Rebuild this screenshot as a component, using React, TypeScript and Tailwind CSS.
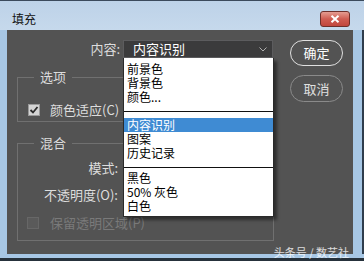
import React from "react";

const font = { fontFamily: '"Noto Sans CJK SC", "Noto Sans", sans-serif' };

function Check() {
  return (
    <div className="w-[12px] h-[12px] bg-[#d4d4d4] border border-[#9a9a9a] flex items-center justify-center">
      <svg width="10" height="10" viewBox="0 0 10 10">
        <polyline points="1.5,5 4,7.5 8.5,2" fill="none" stroke="#2a2a2a" strokeWidth="1.8" />
      </svg>
    </div>
  );
}

function Item({ children, active }: { children: React.ReactNode; active?: boolean }) {
  return (
    <div
      className={
        "h-[14px] leading-[14px] pl-[3px] text-[12px] " +
        (active ? "bg-[#3f8bd3] text-white" : "text-black")
      }
    >
      {children}
    </div>
  );
}

export default function App() {
  return (
    <div
      className="w-[364px] h-[261px] relative overflow-hidden bg-[#a9c8e4] flex flex-col"
      style={font}
    >
      {/* title bar */}
      <div className="h-[30px] flex items-start border-t border-[#3b4a5c] bg-gradient-to-b from-[#bdd2e8] to-[#c6d9ec]">
        <div className="mt-[11px] ml-[12px] text-[12px] leading-[14px] text-[#111]">填充</div>
        <div className="ml-auto mr-[14px] mt-[10px] w-[30px] h-[16px] rounded-[3px] border border-[#6e2f2b] bg-gradient-to-b from-[#e49c92] via-[#cf5c52] to-[#c1463d] flex items-center justify-center">
          <svg width="10" height="8" viewBox="0 0 10 8">
            <path d="M1.5 0.8 L8.5 7.2 M8.5 0.8 L1.5 7.2" stroke="#ffffff" strokeWidth="2" />
          </svg>
        </div>
      </div>

      {/* middle */}
      <div className="flex-1 flex">
        <div className="w-[7px] bg-[#a7c7e5]" />
        <div className="flex-1 bg-[#535353] relative flex pl-[10px] pt-[10px]">
          {/* left column */}
          <div className="w-[257px] flex flex-col">
            <div className="flex h-[18px]">
              <div className="w-[103px] text-right text-[13px] leading-[18px] text-[#dddddd]">内容:</div>
              <div className="ml-[3px] w-[150px] h-[18px] bg-[#3b3b3c] border border-[#5c5c5e] flex items-center pl-[9px] relative">
                <span className="text-[13px] leading-[16px] text-white">内容识别</span>
                <svg className="absolute right-[5px] top-[6px]" width="8" height="5" viewBox="0 0 8 5">
                  <polyline points="0.5,0.5 4,4 7.5,0.5" fill="none" stroke="#b0b0b0" strokeWidth="1" />
                </svg>
              </div>
            </div>

            <fieldset className="mt-[11px] w-[257px] border border-[#707070] pt-[17px] pb-[3px]">
              <legend className="ml-[16px] px-[6px] text-[13px] leading-[16px] text-[#dddddd]">选项</legend>
              <div className="flex items-center h-[16px] pl-[10px]">
                <Check />
                <span className="ml-[10px] text-[13px] leading-[16px] text-[#dddddd]">颜色适应(C)</span>
              </div>
            </fieldset>

            <fieldset className="mt-[13px] w-[257px] border border-[#707070] pt-[9px] pb-[9px]">
              <legend className="ml-[16px] px-[6px] text-[13px] leading-[16px] text-[#dddddd]">混合</legend>
              <div className="flex h-[16px]">
                <div className="w-[100px] text-right text-[13px] leading-[16px] text-[#dddddd]">模式:</div>
              </div>
              <div className="flex h-[16px] mt-[11px]">
                <div className="w-[100px] text-right text-[13px] leading-[16px] text-[#dddddd]">不透明度(O):</div>
              </div>
              <div className="flex items-center h-[16px] mt-[12px] pl-[9px]">
                <div className="w-[12px] h-[12px] bg-[#5a5a5a] border border-[#676767]" />
                <span className="ml-[11px] text-[13px] leading-[16px] text-[#7a7a7a]">保留透明区域(P)</span>
              </div>
            </fieldset>
          </div>

          {/* right column */}
          <div className="ml-[16px] flex flex-col gap-[9px]">
            <div className="w-[53px] h-[26px] rounded-full border border-[#e0e0e0] flex items-center justify-center text-[13px] text-white">
              确定
            </div>
            <div className="w-[53px] h-[27px] rounded-full border border-[#8a8a8a] flex items-center justify-center text-[13px] text-[#e0e0e0]">
              取消
            </div>
          </div>

          {/* dropdown menu */}
          <div className="absolute left-[116px] top-[28px] w-[151px] bg-white border-x border-b border-[#2a2a2a] pt-[4px] pb-[3px] shadow-[3px_3px_3px_rgba(0,0,0,0.45)]">
            <Item>前景色</Item>
            <Item>背景色</Item>
            <Item>颜色...</Item>
            <div className="mt-[7px] mb-[6px] h-px bg-[#111]" />
            <Item active>内容识别</Item>
            <Item>图案</Item>
            <Item>历史记录</Item>
            <div className="mt-[7px] mb-[3px] h-px bg-[#111]" />
            <Item>黑色</Item>
            <Item>50% 灰色</Item>
            <Item>白色</Item>
          </div>
        </div>
        <div className="w-[11px] bg-[#a7c7e5] border-r-2 border-[#2f3d4c]" />
      </div>

      {/* bottom frame */}
      <div className="h-[7px] flex flex-col">
        <div className="h-[4px] bg-[#a7c7e5]" />
        <div className="flex-1 bg-[#26313b]" />
      </div>

      {/* watermark */}
      <div className="absolute right-[15px] bottom-[3px] text-[11px] leading-[12px] text-white/80">
        头条号 / 数艺社
      </div>
    </div>
  );
}
